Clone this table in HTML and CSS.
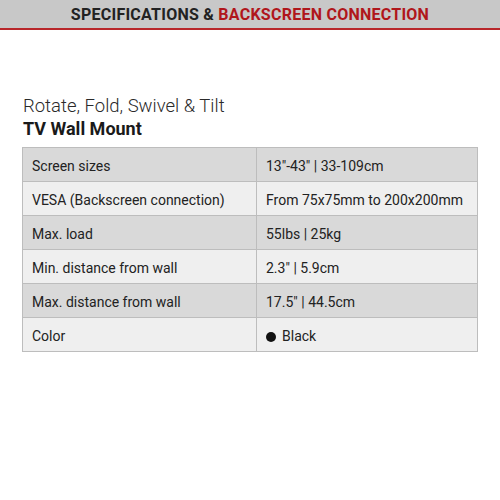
FILE: index.html
```html
<!DOCTYPE html>
<html>
<head>
<meta charset="utf-8">
<link rel="stylesheet" href="styles.css">
</head>
<body>
<header class="banner">
  <h1 class="banner-title">SPECIFICATIONS &amp; <span class="accent">BACKSCREEN CONNECTION</span></h1>
</header>
<main class="content">
  <div class="heading">
    <div class="subtitle">Rotate, Fold, Swivel &amp; Tilt</div>
    <div class="title">TV Wall Mount</div>
  </div>
  <table class="specs">
    <tr class="odd"><td>Screen sizes</td><td>13"-43" | 33-109cm</td></tr>
    <tr class="even"><td>VESA (Backscreen connection)</td><td>From 75x75mm to 200x200mm</td></tr>
    <tr class="odd"><td>Max. load</td><td>55lbs | 25kg</td></tr>
    <tr class="even"><td>Min. distance from wall</td><td>2.3" | 5.9cm</td></tr>
    <tr class="odd"><td>Max. distance from wall</td><td>17.5" | 44.5cm</td></tr>
    <tr class="even"><td>Color</td><td><span class="dot"></span>Black</td></tr>
  </table>
</main>
</body>
</html>
```
FILE: styles.css
```css
html, body { margin: 0; padding: 0; background: #fff; }
body { font-family: "Roboto", "Liberation Sans", sans-serif; color: #1e1e1e; width: 500px; height: 500px; overflow: hidden; }
.banner { background: #c8c8c8; height: 28px; border-bottom: 2px solid #b8262a; display: flex; align-items: center; justify-content: center; }
.banner-title { margin: 0; font-size: 16px; font-weight: 700; letter-spacing: 0.25px; color: #222; }
.accent { color: #b0161b; }
.content { padding: 65px 22px 0 22px; }
.heading { padding-left: 1px; margin-bottom: 7px; }
.subtitle { font-size: 18.5px; font-weight: 300; line-height: 23px; color: #2a2a2a; }
.title { font-size: 18px; font-weight: 700; line-height: 22px; color: #1a1a1a; }
.specs { border-collapse: collapse; width: 456px; font-size: 14px; color: #222; }
.specs td { border: 1px solid #bdbdbd; height: 31px; padding: 2px 0 0 9px; }
.specs td:first-child { width: 224px; }
.odd td { background: #d9d9d9; }
.even td { background: #efefef; }
.dot { display: inline-block; width: 10px; height: 10px; border-radius: 50%; background: #111; margin-right: 6px; vertical-align: -1px; }
```
